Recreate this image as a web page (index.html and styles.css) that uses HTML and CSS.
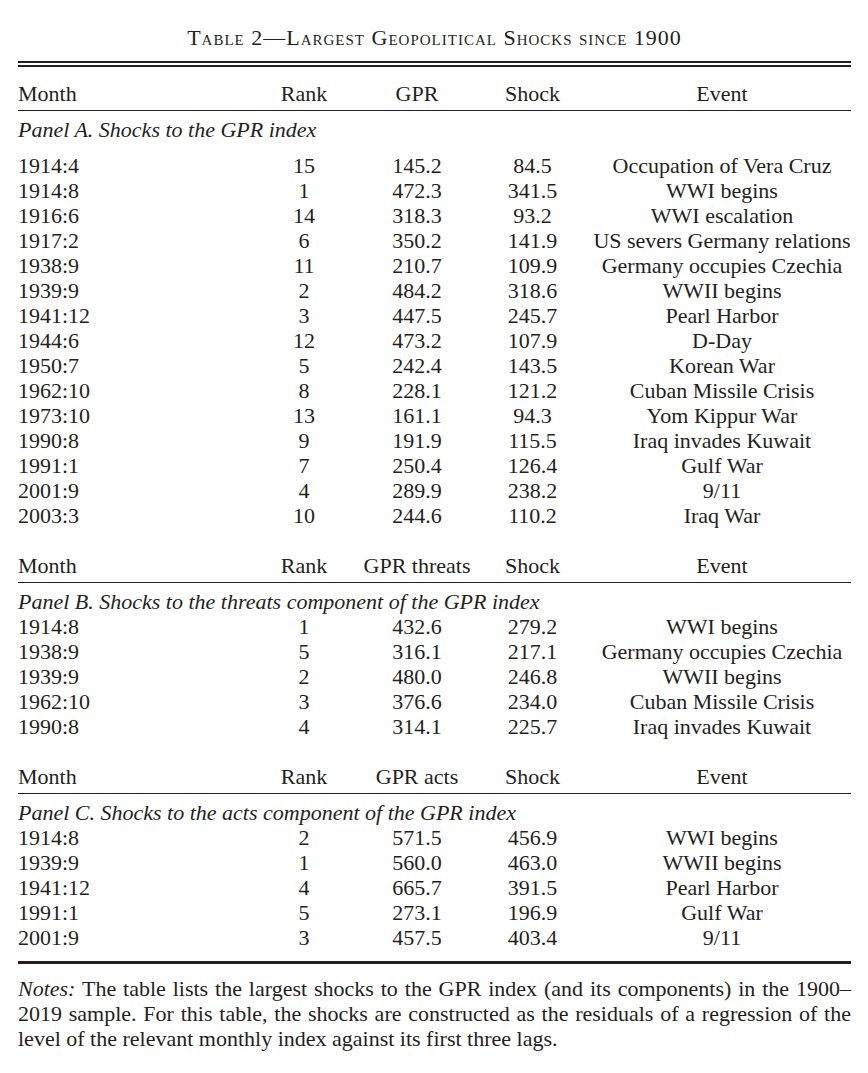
FILE: index.html
```html
<!DOCTYPE html>
<html lang="en">
<head>
<meta charset="utf-8">
<title>Table 2 — Largest Geopolitical Shocks since 1900</title>
<link rel="stylesheet" href="styles.css">
</head>
<body>
<div class="page">
  <h1 class="title">Table 2—Largest Geopolitical Shocks since 1900</h1>
  <div class="double-rule"></div>
  <table class="shocks">
    <colgroup>
      <col class="c-month"><col class="c-rank"><col class="c-gpr"><col class="c-shock"><col class="c-event">
    </colgroup>
    <tbody class="panel panel-a">
      <tr class="head"><th class="l">Month</th><th>Rank</th><th>GPR</th><th>Shock</th><th>Event</th></tr>
      <tr class="label"><td colspan="5">Panel A. Shocks to the GPR index</td></tr>
      <tr class="first"><td class="l">1914:4</td><td>15</td><td>145.2</td><td>84.5</td><td>Occupation of Vera Cruz</td></tr>
      <tr><td class="l">1914:8</td><td>1</td><td>472.3</td><td>341.5</td><td>WWI begins</td></tr>
      <tr><td class="l">1916:6</td><td>14</td><td>318.3</td><td>93.2</td><td>WWI escalation</td></tr>
      <tr><td class="l">1917:2</td><td>6</td><td>350.2</td><td>141.9</td><td>US severs Germany relations</td></tr>
      <tr><td class="l">1938:9</td><td>11</td><td>210.7</td><td>109.9</td><td>Germany occupies Czechia</td></tr>
      <tr><td class="l">1939:9</td><td>2</td><td>484.2</td><td>318.6</td><td>WWII begins</td></tr>
      <tr><td class="l">1941:12</td><td>3</td><td>447.5</td><td>245.7</td><td>Pearl Harbor</td></tr>
      <tr><td class="l">1944:6</td><td>12</td><td>473.2</td><td>107.9</td><td>D-Day</td></tr>
      <tr><td class="l">1950:7</td><td>5</td><td>242.4</td><td>143.5</td><td>Korean War</td></tr>
      <tr><td class="l">1962:10</td><td>8</td><td>228.1</td><td>121.2</td><td>Cuban Missile Crisis</td></tr>
      <tr><td class="l">1973:10</td><td>13</td><td>161.1</td><td>94.3</td><td>Yom Kippur War</td></tr>
      <tr><td class="l">1990:8</td><td>9</td><td>191.9</td><td>115.5</td><td>Iraq invades Kuwait</td></tr>
      <tr><td class="l">1991:1</td><td>7</td><td>250.4</td><td>126.4</td><td>Gulf War</td></tr>
      <tr><td class="l">2001:9</td><td>4</td><td>289.9</td><td>238.2</td><td>9/11</td></tr>
      <tr><td class="l">2003:3</td><td>10</td><td>244.6</td><td>110.2</td><td>Iraq War</td></tr>
    </tbody>
    <tbody class="panel panel-b">
      <tr class="head"><th class="l">Month</th><th>Rank</th><th>GPR threats</th><th>Shock</th><th>Event</th></tr>
      <tr class="label"><td colspan="5">Panel B. Shocks to the threats component of the GPR index</td></tr>
      <tr><td class="l">1914:8</td><td>1</td><td>432.6</td><td>279.2</td><td>WWI begins</td></tr>
      <tr><td class="l">1938:9</td><td>5</td><td>316.1</td><td>217.1</td><td>Germany occupies Czechia</td></tr>
      <tr><td class="l">1939:9</td><td>2</td><td>480.0</td><td>246.8</td><td>WWII begins</td></tr>
      <tr><td class="l">1962:10</td><td>3</td><td>376.6</td><td>234.0</td><td>Cuban Missile Crisis</td></tr>
      <tr><td class="l">1990:8</td><td>4</td><td>314.1</td><td>225.7</td><td>Iraq invades Kuwait</td></tr>
    </tbody>
    <tbody class="panel panel-c">
      <tr class="head"><th class="l">Month</th><th>Rank</th><th>GPR acts</th><th>Shock</th><th>Event</th></tr>
      <tr class="label"><td colspan="5">Panel C. Shocks to the acts component of the GPR index</td></tr>
      <tr><td class="l">1914:8</td><td>2</td><td>571.5</td><td>456.9</td><td>WWI begins</td></tr>
      <tr><td class="l">1939:9</td><td>1</td><td>560.0</td><td>463.0</td><td>WWII begins</td></tr>
      <tr><td class="l">1941:12</td><td>4</td><td>665.7</td><td>391.5</td><td>Pearl Harbor</td></tr>
      <tr><td class="l">1991:1</td><td>5</td><td>273.1</td><td>196.9</td><td>Gulf War</td></tr>
      <tr><td class="l">2001:9</td><td>3</td><td>457.5</td><td>403.4</td><td>9/11</td></tr>
    </tbody>
  </table>
  <p class="notes"><em>Notes:</em> The table lists the largest shocks to the GPR index (and its components) in the 1900–<wbr>2019 sample. For this table, the shocks are constructed as the residuals of a regression of the level of the relevant monthly index against its first three lags.</p>
</div>
</body>
</html>
```

FILE: styles.css
```css
html, body {
  margin: 0;
  padding: 0;
  background: #ffffff;
}

body {
  font-family: "Liberation Serif", "Times New Roman", serif;
  color: #231f20;
  font-size: 22px;
}

.page {
  width: 833px;
  padding: 26px 17px 0 18px;
}

.title {
  margin: 0;
  font-size: 22px;
  font-weight: normal;
  font-variant: small-caps;
  letter-spacing: 1px;
  text-align: center;
  line-height: 24px;
  height: 24px;
}

.double-rule {
  margin-top: 11px;
  height: 2px;
  border-top: 2px solid #231f20;
  border-bottom: 2px solid #231f20;
}

.shocks {
  width: 833px;
  table-layout: fixed;
  border-collapse: collapse;
  border-spacing: 0;
}

.c-month { width: 228px; }
.c-rank { width: 116px; }
.c-gpr { width: 110px; }
.c-shock { width: 121px; }
.c-event { width: 258px; }

.shocks th,
.shocks td {
  padding: 0;
  height: 25px;
  line-height: 25px;
  font-weight: normal;
  text-align: center;
  white-space: nowrap;
  vertical-align: middle;
}

.shocks .l {
  text-align: left;
}

.shocks tr.head th {
  height: 29px;
  vertical-align: top;
  border-bottom: 1px solid #231f20;
}

.panel-a tr.head th {
  padding-top: 14px;
}

.panel-b tr.head th,
.panel-c tr.head th {
  padding-top: 25px;
}

.shocks tr.label td {
  text-align: left;
  font-style: italic;
  padding-top: 6px;
}

.panel-a tr.first td {
  padding-top: 11px;
}

.panel-c tr:last-child td {
  padding-bottom: 11px;
  border-bottom: 3px solid #231f20;
}

.notes {
  margin: 0;
  padding-top: 12px;
  line-height: 25px;
  text-align: justify;
  hyphens: none;
}

.notes em {
  font-style: italic;
}
```
